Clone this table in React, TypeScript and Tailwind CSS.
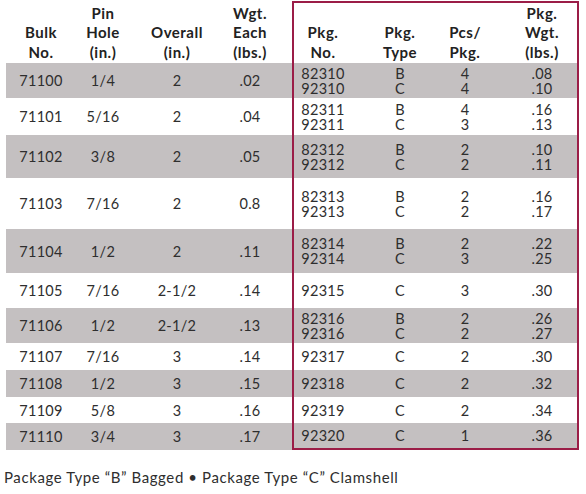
import React from 'react';

type Row = {
  bulk: string;
  pin: string;
  overall: string;
  wgt: string;
  pkg: string[];
  type: string[];
  pcs: string[];
  pkgWgt: string[];
  h: string;
};

const rows: Row[] = [
  { bulk: '71100', pin: '1/4', overall: '2', wgt: '.02', pkg: ['82310', '92310'], type: ['B', 'C'], pcs: ['4', '4'], pkgWgt: ['.08', '.10'], h: 'h-[35px]' },
  { bulk: '71101', pin: '5/16', overall: '2', wgt: '.04', pkg: ['82311', '92311'], type: ['B', 'C'], pcs: ['4', '3'], pkgWgt: ['.16', '.13'], h: 'h-[37px]' },
  { bulk: '71102', pin: '3/8', overall: '2', wgt: '.05', pkg: ['82312', '92312'], type: ['B', 'C'], pcs: ['2', '2'], pkgWgt: ['.10', '.11'], h: 'h-[43px]' },
  { bulk: '71103', pin: '7/16', overall: '2', wgt: '0.8', pkg: ['82313', '92313'], type: ['B', 'C'], pcs: ['2', '2'], pkgWgt: ['.16', '.17'], h: 'h-[51px]' },
  { bulk: '71104', pin: '1/2', overall: '2', wgt: '.11', pkg: ['82314', '92314'], type: ['B', 'C'], pcs: ['2', '3'], pkgWgt: ['.22', '.25'], h: 'h-[44px]' },
  { bulk: '71105', pin: '7/16', overall: '2-1/2', wgt: '.14', pkg: ['92315'], type: ['C'], pcs: ['3'], pkgWgt: ['.30'], h: 'h-[35px]' },
  { bulk: '71106', pin: '1/2', overall: '2-1/2', wgt: '.13', pkg: ['82316', '92316'], type: ['B', 'C'], pcs: ['2', '2'], pkgWgt: ['.26', '.27'], h: 'h-[35px]' },
  { bulk: '71107', pin: '7/16', overall: '3', wgt: '.14', pkg: ['92317'], type: ['C'], pcs: ['2'], pkgWgt: ['.30'], h: 'h-[27px]' },
  { bulk: '71108', pin: '1/2', overall: '3', wgt: '.15', pkg: ['92318'], type: ['C'], pcs: ['2'], pkgWgt: ['.32'], h: 'h-[27px]' },
  { bulk: '71109', pin: '5/8', overall: '3', wgt: '.16', pkg: ['92319'], type: ['C'], pcs: ['2'], pkgWgt: ['.34'], h: 'h-[26px]' },
  { bulk: '71110', pin: '3/4', overall: '3', wgt: '.17', pkg: ['92320'], type: ['C'], pcs: ['1'], pkgWgt: ['.36'], h: 'h-[27px]' },
];

const Cell = ({ w, lines, className = '' }: { w: string; lines: string[]; className?: string }) => (
  <div className={`flex flex-col items-center justify-center whitespace-nowrap ${w} ${className}`}>
    {lines.map((l, i) => (
      <span key={i}>{l}</span>
    ))}
  </div>
);

const HeadCell = ({ w, lines, className = '' }: { w: string; lines: string[]; className?: string }) => (
  <div className={`flex flex-col items-center justify-end whitespace-nowrap ${w} ${className}`}>
    {lines.map((l, i) => (
      <span key={i}>{l}</span>
    ))}
  </div>
);

const App = () => {
  return (
    <div className="w-[586px] h-[494px] bg-white pt-px text-[#2e2e2e]" style={{ fontFamily: 'Lato, "Liberation Sans", sans-serif' }}>
      {/* header */}
      <div className="flex h-[62px] font-bold text-[15px] leading-[19.5px] tracking-[0.5px] text-[#222]">
        <div className="ml-[6px] flex w-[286px] pb-px">
          <HeadCell w="w-[70px]" lines={['Bulk', 'No.']} />
          <HeadCell w="w-[54px]" lines={['Pin', 'Hole', '(in.)']} />
          <HeadCell w="w-[94px]" lines={['Overall', '(in.)']} />
          <HeadCell w="w-[52px]" lines={['Wgt.', 'Each', '(lbs.)']} />
        </div>
        <div className="flex w-[287px] border-x-2 border-t-2 border-[#9b1d47] pb-px">
          <HeadCell w="w-[58px]" lines={['Pkg.', 'No.']} />
          <HeadCell w="w-[96px]" lines={['Pkg.', 'Type']} />
          <HeadCell w="w-[34px]" lines={['Pcs/', 'Pkg.']} />
          <HeadCell w="w-[70px]" className="ml-auto" lines={['Pkg.', 'Wgt.', '(lbs.)']} />
        </div>
      </div>

      {/* body */}
      {rows.map((r, i) => {
        const bg = i % 2 === 0 ? 'bg-[#c4c0c1]' : 'bg-white';
        const last = i === rows.length - 1;
        return (
          <div key={r.bulk} className={`flex text-[14.5px] leading-[15px] tracking-[0.3px] ${r.h}`}>
            <div className={`ml-[6px] flex w-[286px] ${bg}`}>
              <Cell w="w-[70px]" lines={[r.bulk]} />
              <Cell w="w-[54px]" lines={[r.pin]} />
              <Cell w="w-[94px]" lines={[r.overall]} />
              <Cell w="w-[52px]" lines={[r.wgt]} />
            </div>
            <div className={`flex w-[287px] border-x-2 border-[#9b1d47] ${last ? 'border-b-2' : ''} ${bg}`}>
              <Cell w="w-[58px]" lines={r.pkg} />
              <Cell w="w-[96px]" lines={r.type} />
              <Cell w="w-[34px]" lines={r.pcs} />
              <Cell w="w-[70px]" className="ml-auto" lines={r.pkgWgt} />
            </div>
          </div>
        );
      })}

      <p className="mt-[17px] ml-[4px] text-[15px] leading-[20px] tracking-[0.6px] text-[#2e2e2e]">
        Package Type “B” Bagged • Package Type “C” Clamshell
      </p>
    </div>
  );
};

export default App;
